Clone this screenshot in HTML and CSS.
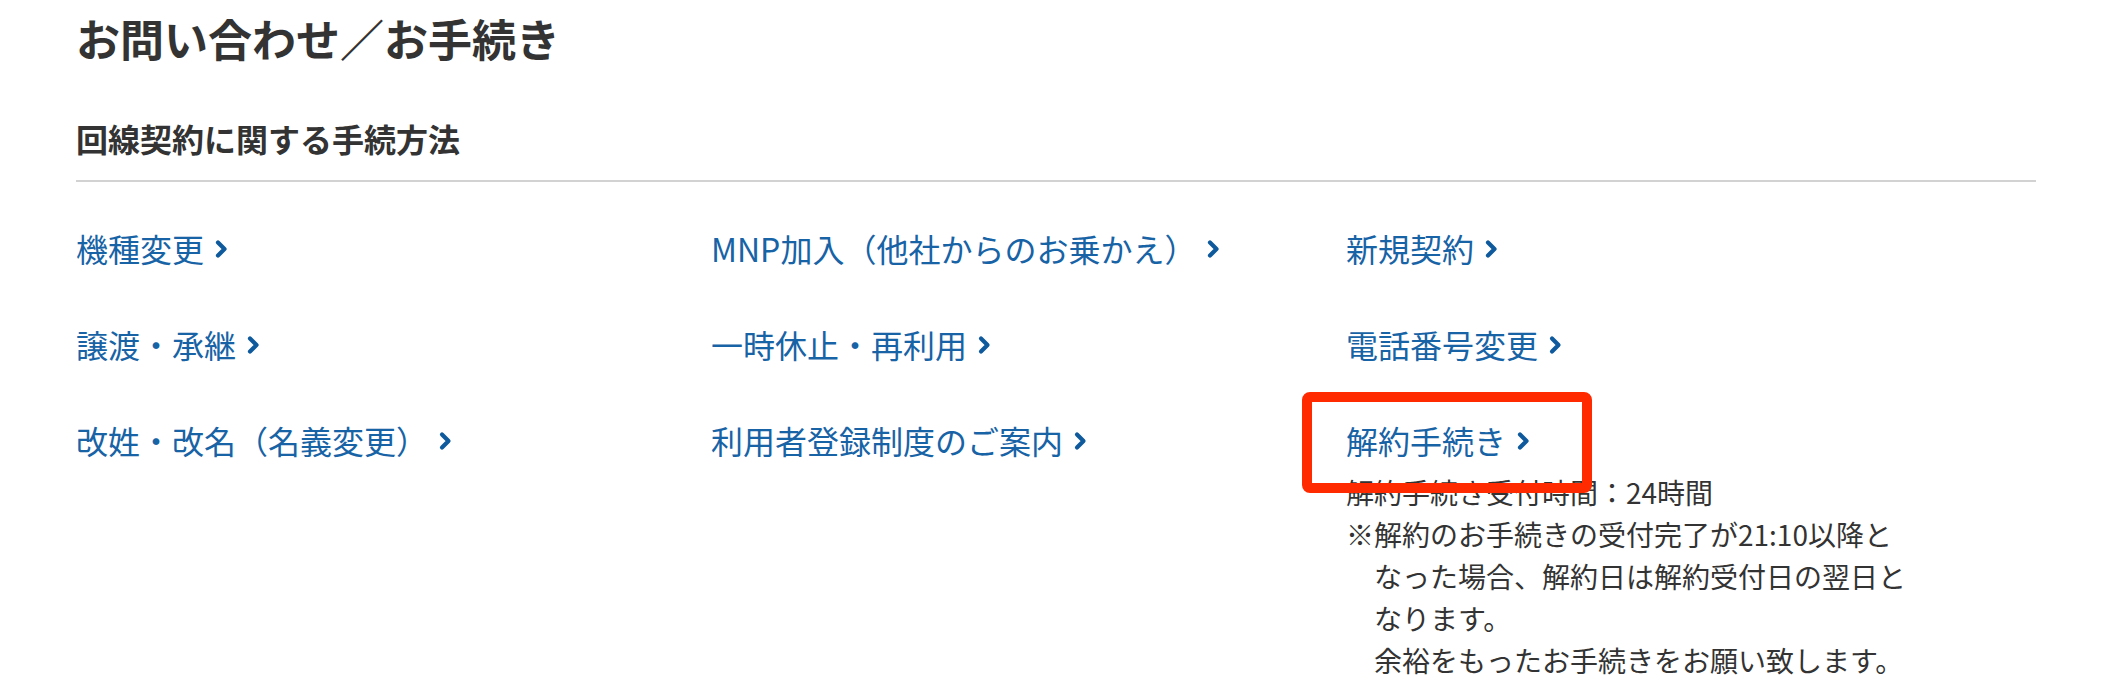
FILE: index.html
```html
<!DOCTYPE html>
<html lang="ja">
<head>
<meta charset="utf-8">
<title>お問い合わせ／お手続き</title>
<link rel="stylesheet" href="styles.css">
</head>
<body>
<main class="page">
  <h1 class="page-title">お問い合わせ／お手続き</h1>
  <section class="section">
    <h2 class="section-title">回線契約に関する手続方法</h2>
    <ul class="link-grid">
      <li class="cell"><a class="link" href="#">機種変更<svg class="chev" viewBox="0 0 16 22" width="16" height="22"><path d="M5 4.5 L11.5 11 L5 17.5"/></svg></a></li>
      <li class="cell"><a class="link" href="#">MNP加入（他社からのお乗かえ）<svg class="chev" viewBox="0 0 16 22" width="16" height="22"><path d="M5 4.5 L11.5 11 L5 17.5"/></svg></a></li>
      <li class="cell"><a class="link" href="#">新規契約<svg class="chev" viewBox="0 0 16 22" width="16" height="22"><path d="M5 4.5 L11.5 11 L5 17.5"/></svg></a></li>
      <li class="cell"><a class="link" href="#">譲渡・承継<svg class="chev" viewBox="0 0 16 22" width="16" height="22"><path d="M5 4.5 L11.5 11 L5 17.5"/></svg></a></li>
      <li class="cell"><a class="link" href="#">一時休止・再利用<svg class="chev" viewBox="0 0 16 22" width="16" height="22"><path d="M5 4.5 L11.5 11 L5 17.5"/></svg></a></li>
      <li class="cell"><a class="link" href="#">電話番号変更<svg class="chev" viewBox="0 0 16 22" width="16" height="22"><path d="M5 4.5 L11.5 11 L5 17.5"/></svg></a></li>
      <li class="cell"><a class="link" href="#">改姓・改名（名義変更）<svg class="chev" viewBox="0 0 16 22" width="16" height="22"><path d="M5 4.5 L11.5 11 L5 17.5"/></svg></a></li>
      <li class="cell"><a class="link" href="#">利用者登録制度のご案内<svg class="chev" viewBox="0 0 16 22" width="16" height="22"><path d="M5 4.5 L11.5 11 L5 17.5"/></svg></a></li>
      <li class="cell cell-marked">
        <span class="highlight" aria-hidden="true"></span>
        <a class="link" href="#">解約手続き<svg class="chev" viewBox="0 0 16 22" width="16" height="22"><path d="M5 4.5 L11.5 11 L5 17.5"/></svg></a>
        <div class="note">
          <p class="note-line">解約手続き受付時間：24時間</p>
          <p class="note-kome">※解約のお手続きの受付完了が21:10以降となった場合、解約日は解約受付日の翌日となります。</p>
          <p class="note-indent">余裕をもったお手続きをお願い致します。</p>
        </div>
      </li>
    </ul>
  </section>
</main>
</body>
</html>
```
FILE: styles.css
```css
html, body {
  margin: 0;
  padding: 0;
  background: #ffffff;
}

body {
  font-family: "Noto Sans CJK JP", "Noto Sans", sans-serif;
  color: #333333;
}

.page {
  margin-left: 76px;
  width: 1960px;
  padding-top: 8px;
}

.page-title {
  margin: 0;
  font-size: 44px;
  line-height: 60px;
  font-weight: 700;
  color: #333333;
}

.section {
  margin-top: 46px;
}

.section-title {
  margin: 0;
  font-size: 32px;
  line-height: 48px;
  font-weight: 700;
  color: #333333;
  padding-bottom: 18px;
  border-bottom: 2px solid #d2d2d2;
}

.link-grid {
  list-style: none;
  margin: 42px 0 0 0;
  padding: 0;
  display: grid;
  grid-template-columns: 635px 635px 1fr;
  row-gap: 48px;
}

.cell {
  margin: 0;
  padding: 0;
}

.cell-marked {
  position: relative;
}

.link {
  display: inline-flex;
  align-items: center;
  font-size: 32px;
  line-height: 48px;
  color: #1763a6;
  text-decoration: none;
}

.chev {
  margin-left: 9px;
  margin-top: 2px;
  flex: none;
}

.chev path {
  fill: none;
  stroke: #0e5a9c;
  stroke-width: 4.2;
  stroke-linecap: round;
  stroke-linejoin: round;
}

.note {
  margin-top: 7px;
  width: 565px;
  font-size: 28px;
  line-height: 42px;
  color: #333333;
}

.note p {
  margin: 0;
}

.note-kome {
  padding-left: 1em;
  text-indent: -1em;
}

.note-indent {
  padding-left: 1em;
}

.highlight {
  position: absolute;
  left: -44px;
  top: -24px;
  width: 290px;
  height: 101px;
  box-sizing: border-box;
  border: 10px solid #ff2a00;
  border-radius: 8px;
  z-index: 2;
  pointer-events: none;
}
```
